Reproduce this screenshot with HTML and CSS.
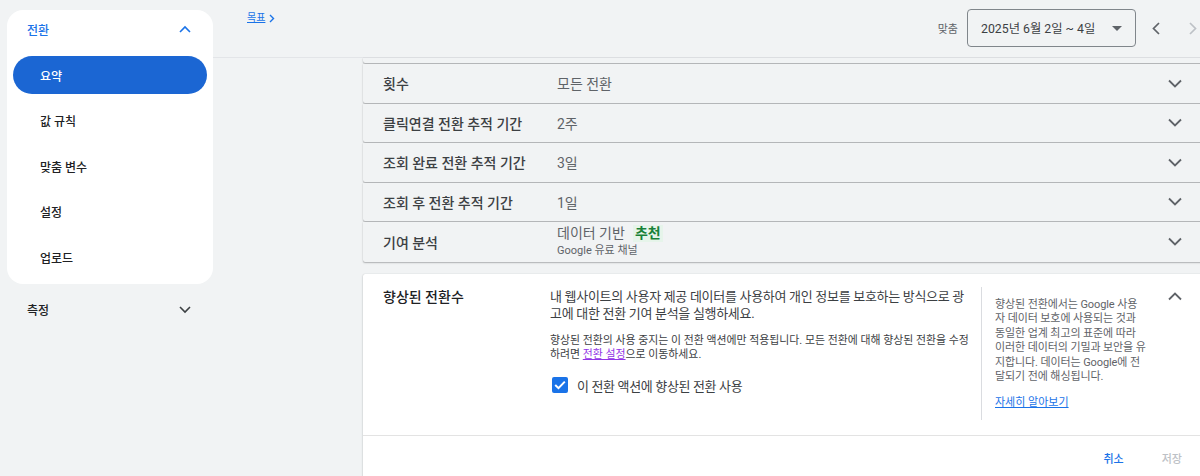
FILE: index.html
```html
<!DOCTYPE html>
<html lang="ko">
<head>
<meta charset="utf-8">
<title>전환 요약</title>
<link rel="stylesheet" href="styles.css">
</head>
<body>
<aside class="sidebar">
  <nav class="nav-card">
    <div class="nav-head">
      <span>전환</span>
      <svg class="chev" width="12" height="8" viewBox="0 0 12 8"><polyline points="1,7 6,2 11,7" fill="none" stroke="#1a73e8" stroke-width="1.6"/></svg>
    </div>
    <div class="nav-list">
      <a class="nav-item active">요약</a>
      <a class="nav-item">값 규칙</a>
      <a class="nav-item">맞춤 변수</a>
      <a class="nav-item">설정</a>
      <a class="nav-item">업로드</a>
    </div>
  </nav>
  <div class="nav-section">
    <span>측정</span>
    <svg class="chev" width="12" height="8" viewBox="0 0 12 8"><polyline points="1,1 6,6 11,1" fill="none" stroke="#3c4043" stroke-width="1.6"/></svg>
  </div>
</aside>

<main class="main">
  <header class="topbar">
    <div class="crumb"><a class="crumb-link">목표</a><svg width="6" height="9" viewBox="0 0 6 9"><polyline points="1,1 4.5,4.5 1,8" fill="none" stroke="#1a73e8" stroke-width="1.4"/></svg></div>
    <div class="controls">
      <span class="range-label">맞춤</span>
      <div class="date-select">
        <span>2025년 6월 2일 ~ 4일</span>
        <svg width="10" height="5" viewBox="0 0 10 5"><polygon points="0,0 10,0 5,5" fill="#5f6368"/></svg>
      </div>
      <span class="nav-btn prev"><svg width="8" height="13" viewBox="0 0 8 13"><polyline points="7,1 1.5,6.5 7,12" fill="none" stroke="#5f6368" stroke-width="1.7"/></svg></span>
      <span class="nav-btn next"><svg width="8" height="13" viewBox="0 0 8 13"><polyline points="1,1 6.5,6.5 1,12" fill="none" stroke="#bdc1c6" stroke-width="1.7"/></svg></span>
    </div>
  </header>

  <section class="content">
    <div class="row partial"></div>
    <div class="row">
      <span class="row-label">횟수</span>
      <span class="row-value">모든 전환</span>
      <svg class="row-chev" width="14" height="9" viewBox="0 0 14 9"><polyline points="1,1.5 7,7.5 13,1.5" fill="none" stroke="#5f6368" stroke-width="1.8"/></svg>
    </div>
    <div class="row">
      <span class="row-label">클릭연결 전환 추적 기간</span>
      <span class="row-value">2주</span>
      <svg class="row-chev" width="14" height="9" viewBox="0 0 14 9"><polyline points="1,1.5 7,7.5 13,1.5" fill="none" stroke="#5f6368" stroke-width="1.8"/></svg>
    </div>
    <div class="row">
      <span class="row-label">조회 완료 전환 추적 기간</span>
      <span class="row-value">3일</span>
      <svg class="row-chev" width="14" height="9" viewBox="0 0 14 9"><polyline points="1,1.5 7,7.5 13,1.5" fill="none" stroke="#5f6368" stroke-width="1.8"/></svg>
    </div>
    <div class="row">
      <span class="row-label">조회 후 전환 추적 기간</span>
      <span class="row-value">1일</span>
      <svg class="row-chev" width="14" height="9" viewBox="0 0 14 9"><polyline points="1,1.5 7,7.5 13,1.5" fill="none" stroke="#5f6368" stroke-width="1.8"/></svg>
    </div>
    <div class="row tall">
      <span class="row-label">기여 분석</span>
      <span class="row-value">
        <span class="value-main">데이터 기반 <span class="badge">추천</span></span>
        <span class="value-sub">Google 유료 채널</span>
      </span>
      <svg class="row-chev" width="14" height="9" viewBox="0 0 14 9"><polyline points="1,1.5 7,7.5 13,1.5" fill="none" stroke="#5f6368" stroke-width="1.8"/></svg>
    </div>

    <div class="panel">
      <div class="panel-body">
        <h3 class="panel-title">향상된 전환수</h3>
        <div class="panel-desc">
          <p class="desc">내 웹사이트의 사용자 제공 데이터를 사용하여 개인 정보를 보호하는 방식으로 광고에 대한 전환 기여 분석을 실행하세요.</p>
          <p class="note">향상된 전환의 사용 중지는 이 전환 액션에만 적용됩니다. 모든 전환에 대해 향상된 전환을 수정하려면 <a class="note-link">전환 설정</a>으로 이동하세요.</p>
          <label class="check">
            <span class="box"><svg width="12" height="10" viewBox="0 0 12 10"><polyline points="1.2,5 4.5,8.2 10.8,1.6" fill="none" stroke="#fff" stroke-width="2"/></svg></span>
            <span>이 전환 액션에 향상된 전환 사용</span>
          </label>
        </div>
        <div class="panel-aside">
          <p>향상된 전환에서는 Google 사용<br>자 데이터 보호에 사용되는 것과<br>동일한 업계 최고의 표준에 따라<br>이러한 데이터의 기밀과 보안을 유<br>지합니다. 데이터는 Google에 전<br>달되기 전에 해싱됩니다.</p>
          <a class="aside-link">자세히 알아보기</a>
        </div>
        <svg class="panel-chev" width="14" height="9" viewBox="0 0 14 9"><polyline points="1,7.5 7,1.5 13,7.5" fill="none" stroke="#5f6368" stroke-width="1.8"/></svg>
      </div>
      <div class="panel-foot">
        <span class="btn primary">취소</span>
        <span class="btn disabled">저장</span>
      </div>
    </div>
  </section>
</main>
</body>
</html>
```

FILE: styles.css
```css
html, body {
  margin: 0;
  height: 100%;
}
body {
  background: #f1f3f4;
  font-family: Roboto, "Noto Sans CJK KR", "Noto Sans", sans-serif;
  color: #202124;
  display: flex;
  overflow: hidden;
}
p, h3 { margin: 0; }
a { cursor: pointer; }

/* Sidebar */
.sidebar {
  width: 213px;
  flex-shrink: 0;
  padding: 10px 0 0 7px;
  box-sizing: border-box;
}
.nav-card {
  background: #fff;
  border-radius: 16px;
  width: 206px;
  padding: 0 6px;
  box-sizing: border-box;
}
.nav-head {
  height: 38px;
  display: flex;
  align-items: center;
  justify-content: space-between;
  padding: 0 16px 0 14px;
  color: #1a73e8;
  font-size: 12px;
  font-weight: 500;
}
.nav-list {
  display: flex;
  flex-direction: column;
  padding-top: 8px;
}
.nav-item {
  height: 38px;
  margin-bottom: 7.5px;
  display: flex;
  align-items: center;
  padding-left: 27px;
  border-radius: 19px;
  font-size: 12px;
  font-weight: 500;
  color: #202124;
}
.nav-item.active {
  background: #1b66d3;
  color: #fff;
}
.nav-section {
  margin-top: 7px;
  height: 38px;
  width: 206px;
  box-sizing: border-box;
  display: flex;
  align-items: center;
  justify-content: space-between;
  padding: 0 22px 0 20px;
  font-size: 12px;
  font-weight: 500;
  color: #202124;
}

/* Main */
.main {
  width: 997px;
  flex-shrink: 0;
}
.topbar {
  height: 57px;
  border-bottom: 1px solid #e3e5e8;
  display: flex;
  justify-content: space-between;
  align-items: flex-start;
  padding-left: 34px;
  padding-right: 5px;
}
.crumb {
  padding-top: 11px;
  display: flex;
  align-items: center;
  gap: 4px;
}
.crumb-link {
  color: #1a73e8;
  font-size: 10px;
  line-height: 14px;
  text-decoration: underline;
}
.controls {
  padding-top: 9px;
  display: flex;
  align-items: center;
}
.range-label {
  font-size: 11px;
  color: #5f6368;
  margin-right: 9px;
}
.date-select {
  width: 169px;
  height: 38px;
  box-sizing: border-box;
  border: 1px solid #80868b;
  border-radius: 4px;
  display: flex;
  align-items: center;
  justify-content: space-between;
  padding: 0 13px 0 13px;
  font-size: 12.3px;
  color: #3c4043;
}
.nav-btn {
  width: 24px;
  height: 38px;
  display: flex;
  align-items: center;
  justify-content: center;
}
.nav-btn.prev { margin-left: 8px; }
.nav-btn.next { margin-left: 13px; }

/* Content rows */
.content {
  margin-left: 150px;
  width: 847px;
}
.row {
  height: 38.5px;
  margin-bottom: 1px;
  background: #f1f3f4;
  box-shadow: 0 1px 1.5px rgba(60, 64, 67, 0.35), 0 0 1px rgba(60, 64, 67, 0.25);
  display: grid;
  grid-template-columns: 174px 1fr 14px;
  align-items: center;
  padding: 0 28px 0 20px;
  border-radius: 0 0 2px 2px;
}
.row.partial {
  height: 5px;
  margin-bottom: 1px;
}
.row.tall { height: 39.5px; }
.row-label {
  font-size: 14px;
  font-weight: 500;
  color: #3c4043;
}
.row-value {
  font-size: 14px;
  color: #5f6368;
  display: flex;
  flex-direction: column;
}
.value-main {
  line-height: 17px;
  display: flex;
  align-items: center;
}
.badge {
  margin-left: 8px;
  background: #e6f4ea;
  color: #188038;
  font-weight: 700;
  padding: 0 2px;
  line-height: 17px;
}
.value-sub {
  font-size: 11px;
  line-height: 17px;
  color: #5f6368;
}

/* Expanded panel */
.panel {
  margin-top: 12.5px;
  background: #fff;
  box-shadow: 0 1px 2px rgba(60, 64, 67, 0.3), 0 0 1px rgba(60, 64, 67, 0.25);
  border-radius: 2px 2px 0 0;
  height: 220px;
}
.panel-body {
  display: flex;
  align-items: flex-start;
  padding: 13px 0 15px 20px;
  border-bottom: 1px solid #e3e3e3;
}
.panel-title {
  width: 167px;
  flex-shrink: 0;
  font-size: 14px;
  line-height: 20px;
  font-weight: 500;
  color: #202124;
}
.panel-desc {
  width: 420px;
  flex-shrink: 0;
  padding-top: 0.5px;
}
.desc {
  font-size: 13px;
  line-height: 17px;
  letter-spacing: -0.3px;
  color: #3c4043;
}
.note {
  margin-top: 12.5px;
  font-size: 10.9px;
  line-height: 14px;
  color: #3c4043;
}
.note-link {
  display: inline-block;
  line-height: 14px;
  color: #9334e6;
  text-decoration: underline;
}
.check {
  margin-top: 14px;
  display: flex;
  align-items: center;
  height: 18px;
  padding-left: 2px;
  font-size: 13px;
  letter-spacing: -0.35px;
  color: #3c4043;
}
.box {
  width: 16px;
  height: 16px;
  border-radius: 2px;
  background: #1a73e8;
  display: flex;
  align-items: center;
  justify-content: center;
  margin-right: 9px;
}
.panel-aside {
  margin-left: 11px;
  border-left: 1px solid #dadce0;
  height: 133px;
  padding: 11px 0 0 13px;
  width: 166px;
  flex-shrink: 0;
  box-sizing: border-box;
}
.panel-aside p {
  font-size: 11px;
  line-height: 14.4px;
  letter-spacing: -0.1px;
  color: #5f6368;
  white-space: nowrap;
}
.aside-link {
  display: block;
  margin-top: 11.5px;
  font-size: 11px;
  line-height: 14.4px;
  color: #1a73e8;
  text-decoration: underline;
}
.panel-chev {
  margin-left: 21px;
  margin-top: 5px;
}
.panel-foot {
  display: flex;
  justify-content: flex-end;
  gap: 14px;
  padding: 4px 16px 0 0;
}
.btn {
  height: 36px;
  padding: 0 12px;
  display: flex;
  align-items: center;
  font-size: 11px;
  font-weight: 500;
}
.btn.primary { color: #1a73e8; }
.btn.disabled { color: #bdc1c6; }
```
